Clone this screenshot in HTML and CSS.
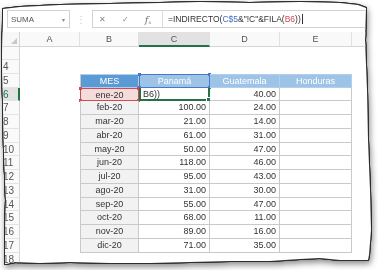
FILE: index.html
```html
<!DOCTYPE html>
<html lang="es">

<head>
    <meta charset="UTF-8">
    <title>INDIRECTO</title>
    <link rel="stylesheet" href="styles.css">
</head>

<body>
    <div class="frame">
        <div class="paper">
            <div class="formula-bar">
                <div class="name-box"><span>SUMA</span><span class="caret">&#9662;</span></div>
                <div class="grip">&#8942;</div>
                <div class="fx-box">
                    <div class="fx-tools">
                        <span class="tool">&#10005;</span>
                        <span class="tool">&#10003;</span>
                        <span class="tool fx">f<span class="fx-x">x</span></span>
                    </div>
                    <div class="formula">=INDIRECTO(<span class="ref-blue">C$5</span>&amp;"!C"&amp;FILA(<span class="ref-red">B6</span>))<span class="cursor"></span></div>
                </div>
            </div>

            <div class="sheet">
                <!-- column headers -->
                <div class="corner"><span class="tri"></span></div>
                <div class="col">A</div>
                <div class="col">B</div>
                <div class="col active">C</div>
                <div class="col">D</div>
                <div class="col">E</div>
                <div class="col"></div>

                <!-- rows 1-3 hidden -->
                <div class="num gap"></div>
                <div class="gap-fill"></div>

                <div class="num">4</div><div></div><div></div><div></div><div></div><div></div><div></div>

                <div class="num">5</div><div></div>
                <div class="t hd dark first">MES</div>
                <div class="t hd sel-blue">Panamá
                    <span class="h b tl"></span><span class="h b tr"></span><span class="h b bl"></span><span class="h b br"></span>
                </div>
                <div class="t hd">Guatemala</div>
                <div class="t hd">Honduras</div>
                <div></div>

                <div class="num on">6</div><div></div>
                <div class="t m first sel-red">ene-20
                    <span class="h r tl"></span><span class="h r tr"></span><span class="h r bl"></span><span class="h r br"></span>
                </div>
                <div class="t edit">B6))<span class="h g br"></span></div>
                <div class="t v">40.00</div>
                <div class="t"></div>
                <div></div>

                <div class="num">7</div><div></div><div class="t m first">feb-20</div><div class="t v">100.00</div><div class="t v">24.00</div><div class="t"></div><div></div>
                <div class="num">8</div><div></div><div class="t m first">mar-20</div><div class="t v">21.00</div><div class="t v">14.00</div><div class="t"></div><div></div>
                <div class="num">9</div><div></div><div class="t m first">abr-20</div><div class="t v">61.00</div><div class="t v">31.00</div><div class="t"></div><div></div>
                <div class="num">10</div><div></div><div class="t m first">may-20</div><div class="t v">50.00</div><div class="t v">47.00</div><div class="t"></div><div></div>
                <div class="num">11</div><div></div><div class="t m first">jun-20</div><div class="t v">118.00</div><div class="t v">46.00</div><div class="t"></div><div></div>
                <div class="num">12</div><div></div><div class="t m first">jul-20</div><div class="t v">95.00</div><div class="t v">43.00</div><div class="t"></div><div></div>
                <div class="num">13</div><div></div><div class="t m first">ago-20</div><div class="t v">31.00</div><div class="t v">30.00</div><div class="t"></div><div></div>
                <div class="num">14</div><div></div><div class="t m first">sep-20</div><div class="t v">55.00</div><div class="t v">47.00</div><div class="t"></div><div></div>
                <div class="num">15</div><div></div><div class="t m first">oct-20</div><div class="t v">68.00</div><div class="t v">11.00</div><div class="t"></div><div></div>
                <div class="num">16</div><div></div><div class="t m first">nov-20</div><div class="t v">89.00</div><div class="t v">16.00</div><div class="t"></div><div></div>
                <div class="num">17</div><div></div><div class="t m first">dic-20</div><div class="t v">71.00</div><div class="t v">35.00</div><div class="t"></div><div></div>
                <div class="num">18</div><div></div><div></div><div></div><div></div><div></div><div></div>
            </div>
        </div>
    </div>
</body>

</html>
```

FILE: styles.css
```css
body {
    margin: 0;
    background: #fff;
    font-family: "Liberation Sans", Arial, sans-serif;
}

/* torn paper */
.frame {
    width: 374px;
    height: 270px;
    filter: drop-shadow(1px 0 0 #2e2e2e) drop-shadow(-1px 0 0 #2e2e2e) drop-shadow(0 1px 0 #2e2e2e) drop-shadow(0 -1px 0 #2e2e2e) drop-shadow(1px 3px 3px rgba(0, 0, 0, 0.45));
}

.paper {
    height: 100%;
    box-sizing: border-box;
    padding-top: 10px;
    background: #fff;
    overflow: hidden;
    clip-path: polygon(3px 9px, 20px 7px, 60px 5px, 110px 4px, 160px 3px, 200px 2px, 250px 3px, 300px 2px, 340px 3px, 358px 5px, 366px 8px,
            365px 40px, 367px 90px, 368px 140px, 370px 190px, 371px 230px, 369px 255px, 368px 260px,
            340px 260px, 320px 258px, 300px 259px, 270px 261px, 230px 261px, 190px 262px, 150px 263px, 110px 263px, 70px 262px, 40px 263px, 15px 262px, 5px 264px,
            5px 240px, 6px 200px, 4px 150px, 3px 100px, 2px 60px, 3px 20px);
}

/* formula bar */
.formula-bar {
    display: flex;
    align-items: center;
    height: 18px;
    margin: 0 0 4px 7px;
}

.name-box {
    width: 63px;
    height: 18px;
    box-sizing: border-box;
    border: 1px solid #d2d2d2;
    display: flex;
    align-items: center;
    justify-content: space-between;
    padding: 0 4px 0 3px;
    font-size: 8px;
    color: #555;
}

.caret {
    font-size: 6px;
    color: #888;
}

.grip {
    width: 22px;
    text-align: center;
    font-size: 10px;
    color: #c4c4c4;
}

.fx-box {
    flex: 1;
    height: 18px;
    box-sizing: border-box;
    border: 1px solid #d2d2d2;
    display: flex;
    align-items: center;
}

.fx-tools {
    width: 70px;
    height: 100%;
    box-sizing: border-box;
    border-right: 1px solid #dcdcdc;
    display: flex;
    align-items: center;
    gap: 15px;
    padding-left: 5px;
}

.tool {
    width: 8px;
    text-align: center;
    font-size: 8px;
    color: #8a8a8a;
}

.fx {
    font-family: "DejaVu Serif", serif;
    font-style: italic;
    font-size: 10px;
    color: #777;
    white-space: nowrap;
}

.fx-x {
    font-size: 5px;
    vertical-align: -1px;
}

.formula {
    padding-left: 5px;
    font-size: 8.5px;
    color: #333;
    white-space: nowrap;
    display: flex;
    align-items: center;
}

.ref-blue {
    color: #3d6fc3;
}

.ref-red {
    color: #d04a55;
}

.cursor {
    display: inline-block;
    width: 1px;
    height: 10px;
    margin-left: 1px;
    background: #333;
}

/* sheet grid */
.sheet {
    display: grid;
    grid-template-columns: 20px 60px 59px 71px 70px 72px 1fr;
    grid-template-rows: 15px 13px;
    grid-auto-rows: 13.75px;
    font-size: 9px;
    color: #333;
}

.sheet > div {
    box-sizing: border-box;
    position: relative;
    line-height: 13px;
    white-space: nowrap;
}

.corner {
    background: #f7f7f7;
    border-right: 1px solid #d6d6d6;
    border-bottom: 1px solid #d6d6d6;
}

.tri {
    position: absolute;
    right: 2px;
    bottom: 2px;
    border-left: 6px solid transparent;
    border-bottom: 6px solid #c8c8c8;
}

.col {
    background: #f9f9f9;
    border-right: 1px solid #e0e0e0;
    border-bottom: 1px solid #d6d6d6;
    text-align: center;
    color: #555;
    line-height: 14px !important;
}

.col.active {
    background: #e2e2e2;
    border-bottom: 2px solid #217346;
}

.num {
    background: #fafafa;
    border-right: 1px solid #d6d6d6;
    border-bottom: 1px solid #e4e4e4;
    padding-left: 3px;
    font-size: 10px;
    color: #555;
}

.num.on {
    background: #e2e2e2;
    color: #217346;
    border-right: 2px solid #217346;
}

.gap-fill {
    grid-column: 2 / 8;
}

/* table */
.t {
    border-right: 1px solid #c9c9c9;
    border-bottom: 1px solid #c9c9c9;
}

.t.first {
    border-left: 1px solid #c9c9c9;
}

.hd {
    background: #9dc3e6;
    color: #fff;
    text-align: center;
    border-top: 1px solid #c9c9c9;
    border-color: #b5cde6;
}

.hd.dark {
    background: #5b9bd5;
}

.m {
    background: #f2f2f2;
    text-align: center;
}

.v {
    text-align: right;
    padding-right: 3px;
}

.edit {
    padding-left: 2px;
    border: 2px solid #217346;
    border-top: none;
    line-height: 12px !important;
}

.sel-red {
    background: #f4dcdc;
    border: 1px solid #cf4d52 !important;
}

.sel-blue {
    border: 1px solid #4a78c8 !important;
}

/* reference handles */
.h {
    position: absolute;
    width: 3px;
    height: 3px;
}

.h.r {
    background: #cf4d52;
}

.h.b {
    background: #4a78c8;
}

.h.g {
    background: #217346;
    border: 1px solid #fff;
    right: -3px;
    bottom: -3px;
}

.tl {
    left: -2px;
    top: -2px;
}

.tr {
    right: -2px;
    top: -2px;
}

.bl {
    left: -2px;
    bottom: -2px;
}

.br {
    right: -2px;
    bottom: -2px;
}
```
